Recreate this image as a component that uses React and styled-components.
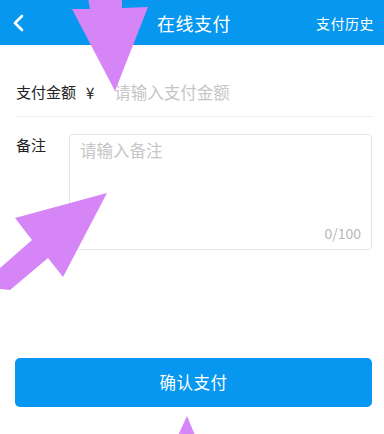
import styled, { createGlobalStyle } from "styled-components";

const GlobalStyle = createGlobalStyle`
    html, body {
        margin: 0;
        padding: 0;
        background: #ffffff;
    }
    body {
        font-family: "Noto Sans CJK SC", "Noto Sans", "Liberation Sans", sans-serif;
    }
    * {
        box-sizing: border-box;
    }
`

const Page = styled.div`
    position: relative;
    width: 384px;
    height: 434px;
    overflow: hidden;
    background: #ffffff;
    display: flex;
    flex-direction: column;
`

const Header = styled.header`
    height: 45px;
    background: #0797ee;
    display: grid;
    grid-template-columns: 1fr auto 1fr;
    align-items: center;
    color: #ffffff;
`

const BackButton = styled.button`
    justify-self: start;
    border: 0;
    background: none;
    padding: 0 0 0 12px;
    display: flex;
    align-items: center;
    cursor: pointer;
`

const Title = styled.h1`
    margin: 0;
    font-size: 18px;
    font-weight: 400;
    letter-spacing: 0.5px;
    transform: translateX(2px);
`

const HeaderLink = styled.span`
    justify-self: end;
    font-size: 14px;
    padding-right: 10px;
    letter-spacing: 0.5px;
`

const Form = styled.div`
    display: flex;
    flex-direction: column;
    padding: 0 12px 0 16px;
`

const AmountRow = styled.label`
    display: flex;
    align-items: center;
    padding: 36px 0 13px;
    border-bottom: 1px solid #eeeeee;
`

const Label = styled.span`
    font-size: 15px;
    line-height: 22px;
    color: #222222;
    width: ${p => p.$width || "auto"};
    flex-shrink: 0;
`

const Currency = styled.span`
    font-size: 15px;
    color: #222222;
    margin: 0 20px 0 10px;
`

const AmountInput = styled.input`
    flex: 1;
    border: 0;
    outline: none;
    font-size: 16.5px;
    line-height: 22px;
    padding: 0;
    font-family: inherit;
    color: #222222;
    background: transparent;
    &::placeholder {
        color: #c6c6c6;
    }
`

const RemarkRow = styled.div`
    display: flex;
    align-items: flex-start;
    padding-top: 17px;
`

const RemarkBox = styled.div`
    flex: 1;
    height: 116px;
    border: 1px solid #dfe7ea;
    border-radius: 4px;
    display: flex;
    flex-direction: column;
    padding: 4px 10px 6px;
`

const RemarkInput = styled.textarea`
    flex: 1;
    border: 0;
    outline: none;
    resize: none;
    padding: 0;
    font-family: inherit;
    font-size: 16.5px;
    line-height: 22px;
    color: #222222;
    background: transparent;
    &::placeholder {
        color: #c6c6c6;
    }
`

const Counter = styled.span`
    align-self: flex-end;
    font-size: 14px;
    color: #b8b8b8;
`

const SubmitButton = styled.button`
    margin: 108px 12px 0 15px;
    height: 49px;
    border: 0;
    border-radius: 5px;
    background: #0797f0;
    color: #ffffff;
    font-family: inherit;
    font-size: 16.5px;
    letter-spacing: 0.5px;
    padding-bottom: 2px;
    cursor: pointer;
`

const Overlay = styled.svg`
    position: absolute;
    left: 0;
    top: 0;
    pointer-events: none;
`

const ChevronLeft = () => (
    <svg width="14" height="18" viewBox="0 0 14 18">
        <path d="M10 2 L3 9 L10 16" fill="none" stroke="#ffffff" strokeWidth="2.6" strokeLinecap="round" strokeLinejoin="round" />
    </svg>
)

const App = () => {
    return <Page>
        <GlobalStyle />
        <Header>
            <BackButton aria-label="返回"><ChevronLeft /></BackButton>
            <Title>在线支付</Title>
            <HeaderLink>支付历史</HeaderLink>
        </Header>
        <Form>
            <AmountRow>
                <Label>支付金额</Label>
                <Currency>¥</Currency>
                <AmountInput placeholder="请输入支付金额" />
            </AmountRow>
            <RemarkRow>
                <Label $width="53px">备注</Label>
                <RemarkBox>
                    <RemarkInput placeholder="请输入备注" maxLength={100} />
                    <Counter>0/100</Counter>
                </RemarkBox>
            </RemarkRow>
        </Form>
        <SubmitButton>确认支付</SubmitButton>

        {/* annotation arrows drawn over the screen */}
        <Overlay width="384" height="434" viewBox="0 0 384 434">
            <g fill="#d685f7">
                <polygon points="88,-2 122,-2 122,8 148,7 115,91 72,9 90,9" />
                <polygon points="107,193 63,277 48,258 10,290 0,289 0,268 32,240 15,218" />
                <polygon points="187,416 197,440 176,440" />
            </g>
        </Overlay>
    </Page>
}

export default App;
